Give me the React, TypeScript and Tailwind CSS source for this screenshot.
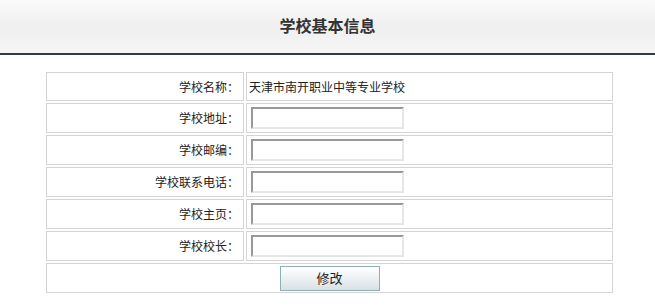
const FONT = '"Noto Sans CJK SC", "Liberation Sans", sans-serif';

const fields = ['学校地址', '学校邮编', '学校联系电话', '学校主页', '学校校长'];

function Label({ text }: { text: string }) {
  return (
    <div className="flex items-center justify-end border border-[#d4d4d4] pr-[4px] text-[12px] text-[#222]">
      {text}：
    </div>
  );
}

export default function App() {
  return (
    <div className="min-h-[307px] bg-white" style={{ fontFamily: FONT }}>
      <div className="flex h-[55px] items-center justify-center border-b-2 border-[#2f3b4b] bg-gradient-to-b from-[#fbfbfb] via-[#efefef] to-[#f6f6f6]">
        <h1 className="pb-[4px] text-[16px] font-bold text-[#333]">学校基本信息</h1>
      </div>

      <div className="ml-[46px] mt-[17px] grid w-[567px] grid-cols-[198px_367px] gap-[2px]">
        <div className="contents">
          <div className="flex h-[29px] items-center justify-end border border-[#d4d4d4] pr-[4px] text-[12px] text-[#222]">
            学校名称：
          </div>
          <div className="flex h-[29px] items-center border border-[#d4d4d4] pl-[2px] text-[12px] text-[#222]">
            天津市南开职业中等专业学校
          </div>
        </div>

        {fields.map((f) => (
          <div key={f} className="contents">
            <Label text={f} />
            <div className="flex h-[30px] items-center border border-[#d4d4d4] pl-[4px]">
              <input
                type="text"
                className="h-[22px] w-[153px] border-2 border-t-[#999] border-l-[#999] border-r-[#e6e6e6] border-b-[#e6e6e6] bg-white text-[12px] outline-none"
              />
            </div>
          </div>
        ))}

        <div className="col-span-2 flex h-[30px] items-center justify-center border border-[#d4d4d4]">
          <button className="h-[25px] w-[100px] border border-[#8fb0b0] bg-gradient-to-b from-white to-[#d9e1e6] text-[13px] text-[#222]">
            修改
          </button>
        </div>
      </div>
    </div>
  );
}
